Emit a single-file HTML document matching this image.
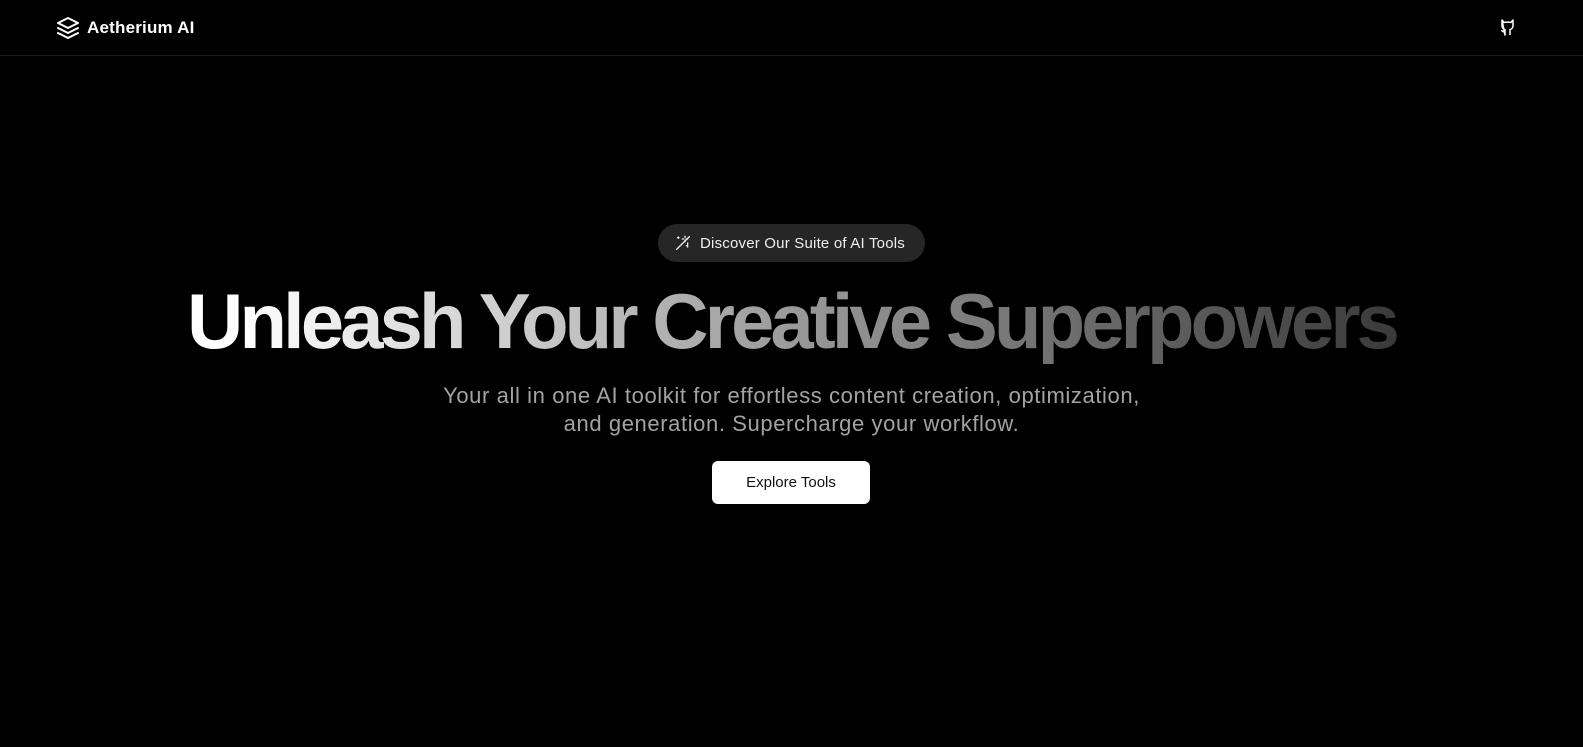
<!DOCTYPE html>
<html><head><meta charset="utf-8"><style>
*{margin:0;padding:0;box-sizing:border-box}
body{width:1583px;height:747px;background:#000;font-family:"Liberation Sans",sans-serif;color:#fff;overflow:hidden;position:relative}
.nav{position:absolute;top:0;left:0;right:0;height:56px;border-bottom:1px solid #1c1c1c}
.logo{position:absolute;left:56px;top:16px;display:flex;align-items:center;gap:7px;font-weight:bold;font-size:17px;letter-spacing:0.2px}
.gh{position:absolute;left:1500px;top:19px}
.pill{position:absolute;left:658px;top:224px;width:267px;height:38px;border-radius:19px;background:#262626;display:flex;align-items:center;padding-left:17px;gap:9px;font-size:15px;color:#eee;letter-spacing:0.2px}
h1{position:absolute;left:0;right:0;top:278px;text-align:center;font-size:78px;font-weight:bold;letter-spacing:-4px;line-height:86px;background:linear-gradient(90deg,#fff 15%,#9a9a9a 50%,#3a3a3a 88%);-webkit-background-clip:text;background-clip:text;color:transparent}
p{position:absolute;left:0;right:0;top:382px;text-align:center;font-size:22px;letter-spacing:0.6px;line-height:28px;color:#a3a3a3}
.btn{position:absolute;left:712px;top:461px;width:158px;height:43px;background:#fff;border-radius:6px;color:#111;font-size:15px;display:flex;align-items:center;justify-content:center}
</style></head><body>
<div class="nav">
<div class="logo"><svg width="24" height="24" viewBox="0 0 24 24" fill="none" stroke="#fff" stroke-width="2" stroke-linejoin="round" stroke-linecap="round"><path d="M12 2 2 7l10 5 10-5-10-5z"/><path d="m2 12 10 5 10-5"/><path d="m2 17 10 5 10-5"/></svg>Aetherium AI</div>
<svg class="gh" width="15" height="17" viewBox="0 0 15 17" fill="none" stroke="#fff" stroke-width="1.5" stroke-linejoin="round"><path d="M2 1 4 3.5C5 3 10 3 11 3.5L13 1V7C13 9 11 10.5 10 10.5V16M5 16V10.5C4 10.5 2 9 2 7V1Z"/><path d="M5 13C3 13 2 12 1.5 11"/></svg>
</div>
<div class="pill"><svg width="16" height="16" viewBox="0 0 24 24" fill="none" stroke="#eee" stroke-width="2" stroke-linecap="round"><path d="m21.6 2.4-19.2 19.2"/><path d="M15 4V2M15 10V8M11 6h2M17 6h2M19 14v-2M19 18v-2M17 16h2M4 4h2M5 3v2"/></svg>Discover Our Suite of AI Tools</div>
<h1>Unleash Your Creative Superpowers</h1>
<p>Your all in one AI toolkit for effortless content creation, optimization,<br>and generation. Supercharge your workflow.</p>
<div class="btn">Explore Tools</div>
</body></html>
